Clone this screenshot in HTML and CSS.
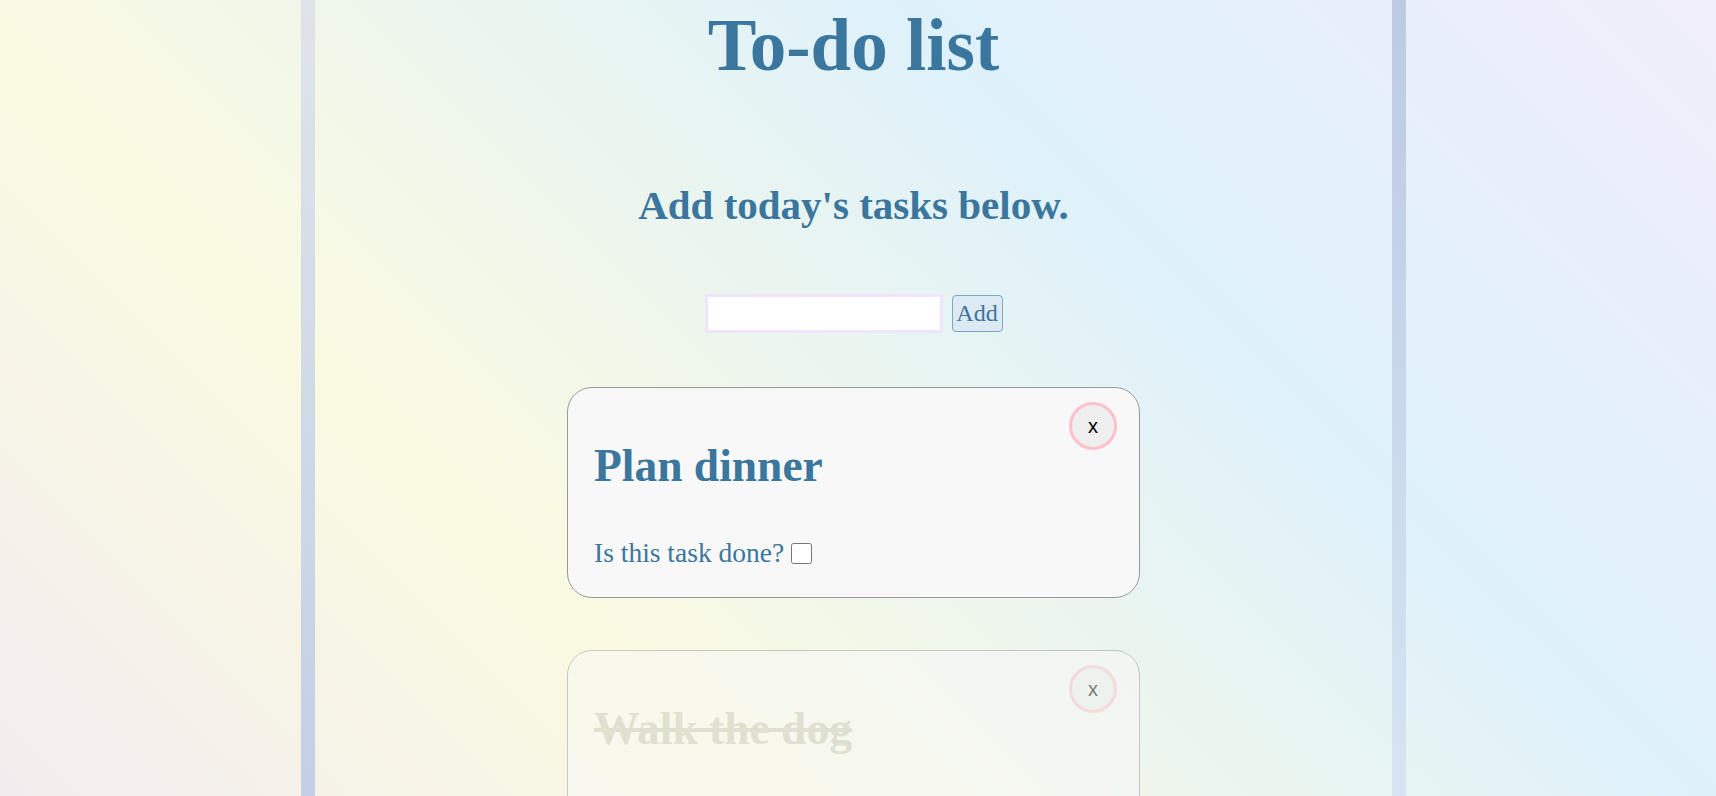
FILE: index.html
```html
<!DOCTYPE html>
<html lang="en">
<head>
<meta charset="utf-8">
<title>To-do list</title>
<link rel="stylesheet" href="styles.css">
</head>
<body>
<main class="page">
  <h1 class="title">To-do list</h1>
  <h2 class="subtitle">Add today's tasks below.</h2>
  <form class="add-form">
    <input class="task-input" type="text" aria-label="New task">
    <button class="add-btn" type="button">Add</button>
  </form>
  <ul class="task-list">
    <li class="card">
      <button class="close-btn" type="button">x</button>
      <h3 class="card-title">Plan dinner</h3>
      <label class="done-row">Is this task done?<input class="done-check" type="checkbox"></label>
    </li>
    <li class="card card-done">
      <button class="close-btn" type="button">x</button>
      <h3 class="card-title">Walk the dog</h3>
      <label class="done-row">Is this task done?<input class="done-check" type="checkbox" checked></label>
    </li>
  </ul>
</main>
</body>
</html>
```
FILE: styles.css
```css
html {
  min-height: 100%;
  background: linear-gradient(45deg, #f3ecef 0%, #fafae1 30%, #def1fb 68%, #f0eefa 100%) fixed;
}

body {
  margin: 0;
  font-family: "Liberation Serif", "Times New Roman", serif;
  color: #3a769d;
}

.page {
  box-sizing: border-box;
  width: 1105px;
  min-height: 100vh;
  margin: 0 0 0 calc(50% - 557px);
  padding: 0 14px 60px;
  text-align: center;
  background:
    linear-gradient(#dfe4e9, #bccae3) left top / 14px 100% no-repeat,
    linear-gradient(#bccae3, #dcebf6) right top / 14px 100% no-repeat;
  overflow: hidden;
}

.title {
  margin: 5px 0 0;
  font-size: 73px;
  line-height: 81px;
  font-weight: bold;
}

.subtitle {
  margin: 97px 0 0;
  font-size: 41px;
  line-height: 45px;
  font-weight: bold;
}

.add-form {
  display: flex;
  justify-content: center;
  align-items: center;
  gap: 9px;
  margin: 66px 0 0;
}

.task-input {
  box-sizing: border-box;
  width: 238px;
  height: 39px;
  margin: 0;
  border: 3px solid #efe4fb;
  background: #ffffff;
  font-family: "Liberation Serif", serif;
  font-size: 20px;
}

.add-btn {
  box-sizing: border-box;
  width: 51px;
  height: 37px;
  margin: 0 0 1px;
  padding: 0;
  border: 1px solid #7fa6c9;
  border-radius: 4px;
  background: #dde9f3;
  color: #3a769d;
  font-family: "Liberation Serif", serif;
  font-size: 24px;
}

.task-list {
  list-style: none;
  margin: 54px 0 0;
  padding: 0;
}

.card {
  position: relative;
  box-sizing: border-box;
  width: 573px;
  margin: 0 auto 52px;
  padding: 16px 24px 29px 26px;
  border: 1px solid #999999;
  border-radius: 25px;
  background: #f8f8f8;
  text-align: left;
}

.close-btn {
  position: absolute;
  top: 14px;
  right: 22px;
  box-sizing: border-box;
  width: 48px;
  height: 48px;
  padding: 0;
  border: 3px solid #ffc0cb;
  border-radius: 50%;
  background: #efefef;
  color: #000000;
  font-family: "Liberation Sans", Arial, sans-serif;
  font-size: 20px;
  line-height: 1;
}

.card-title {
  margin: 37px 0 47px;
  font-size: 45.5px;
  line-height: 50px;
  font-weight: bold;
}

.done-row {
  display: flex;
  align-items: center;
  font-size: 27.5px;
  line-height: 30px;
}

.done-check {
  width: 21px;
  height: 21px;
  margin: 0 0 0 7px;
}

.card-done {
  opacity: 0.5;
}

.card-done .card-title {
  color: #c9c9c0;
  text-decoration: line-through;
}
```
